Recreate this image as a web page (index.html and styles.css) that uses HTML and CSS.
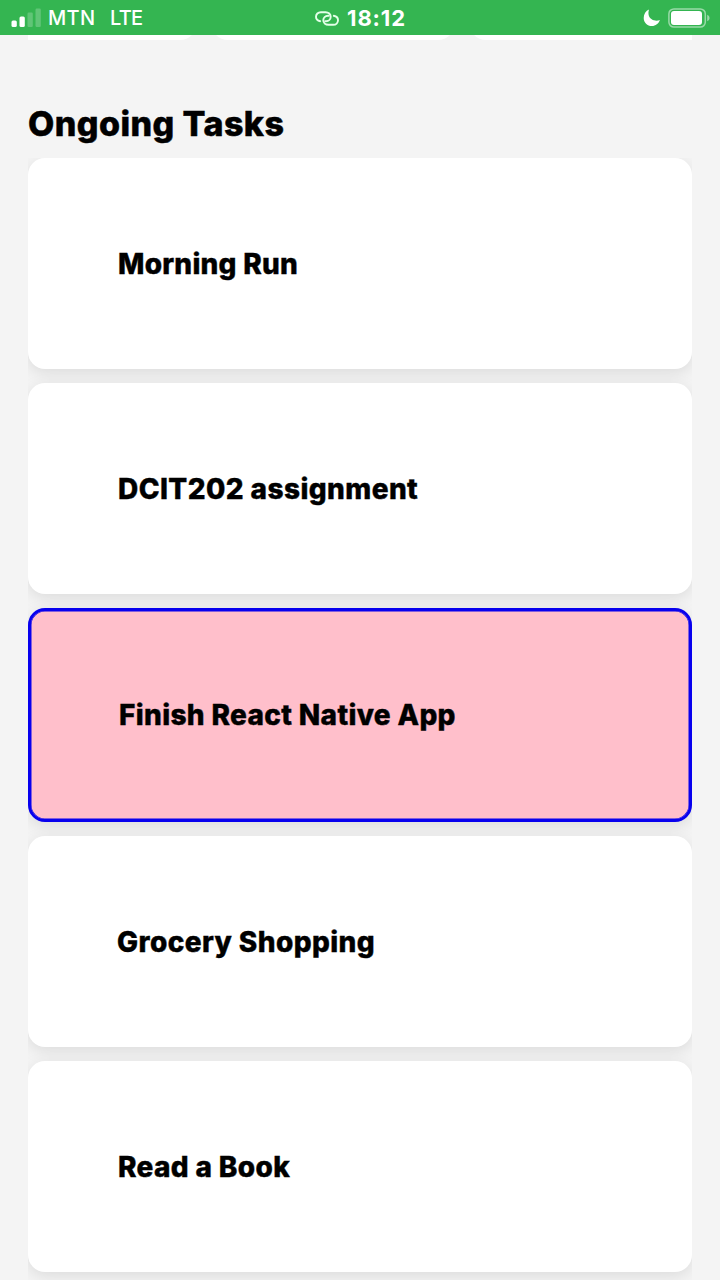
FILE: index.html
```
<!DOCTYPE html>
<html lang="en">
<head>
<meta charset="utf-8">
<title>Ongoing Tasks</title>
<link rel="stylesheet" href="styles.css">
</head>
<body>
<header class="status-bar">
  <div class="carrier">
    <svg class="signal" width="30" height="20" viewBox="0 0 30 20" fill="#fff">
      <rect x="0.5" y="12.5" width="5.3" height="6.5" rx="1.5"/>
      <rect x="8.5" y="8.5" width="5.3" height="10.5" rx="1.5"/>
      <rect x="16.5" y="4.5" width="5.3" height="14.5" rx="1.2" opacity=".22"/>
      <rect x="24.5" y="0.5" width="5.3" height="18.5" rx="1.2" opacity=".22"/>
    </svg>
    <span class="operator">MTN</span>
    <span class="network">LTE</span>
  </div>
  <div class="clock">
    <svg class="link-icon" width="24" height="15" viewBox="0 0 24 15" fill="none" stroke="#e4ffe9" stroke-width="1.9" stroke-linecap="round">
      <path d="M5.2 10.2C2.5 9.7 1 8 1 5.8C1 3.2 3 1.2 5.8 1.2H10.5C13.6 1.2 15.7 3.2 15.7 5.7C15.7 8.2 13.8 10.2 11 10.2H10.2"/>
      <path d="M18.8 4.8C21.5 5.3 23 7 23 9.2C23 11.8 21 13.8 18.2 13.8H13.5C10.4 13.8 8.3 11.8 8.3 9.3C8.3 6.8 10.2 4.8 13 4.8H13.8"/>
    </svg>
    <span class="time">18:12</span>
  </div>
  <div class="power">
    <svg class="moon" width="18" height="18" viewBox="0 0 18 18" fill="#fff">
      <path d="M6 .5C4.6 5.1 6.1 8.6 8.7 10.3C11.2 12 14.3 12.2 16.9 11C15.7 14.5 12.6 17 8.9 17C4.3 17 .7 13.4 .7 8.9C.7 5 2.8 1.9 6 .5Z"/>
    </svg>
    <svg class="battery" width="42" height="20" viewBox="0 0 42 20">
      <rect x=".9" y=".9" width="36.4" height="18.2" rx="5" fill="none" stroke="#fff" stroke-opacity=".5" stroke-width="1.5"/>
      <rect x="3" y="3" width="31" height="14" rx="3" fill="#fff"/>
      <path d="M39.2 6.7Q41.6 7.8 41.6 10Q41.6 12.2 39.2 13.3Z" fill="#fff" opacity=".5"/>
    </svg>
  </div>
</header>
<main class="screen">
  <div class="categories">
    <div class="category"></div>
    <div class="category category-mid"></div>
    <div class="category category-last"></div>
  </div>
  <h1 class="heading">Ongoing Tasks</h1>
  <section class="tasks">
    <article class="task"><span class="title title-tight">Morning Run</span></article>
    <article class="task"><span class="title title-wide">DCIT202 assignment</span></article>
    <article class="task selected"><span class="title">Finish React Native App</span></article>
    <article class="task shifted"><span class="title title-wide">Grocery Shopping</span></article>
    <article class="task"><span class="title">Read a Book</span></article>
  </section>
</main>
</body>
</html>
```
FILE: styles.css
```
* { box-sizing: border-box; }
body {
  margin: 0;
  width: 720px;
  height: 1280px;
  overflow: hidden;
  background: #f4f4f4;
  color: #000;
  font-family: Inter, "Liberation Sans", sans-serif;
}
svg { display: block; flex: none; }
.status-bar {
  display: flex;
  height: 35px;
  padding: 0 10px 0 11px;
  background: #34b551;
  color: #fff;
  line-height: 37px;
  white-space: nowrap;
}
.carrier { display: flex; width: 304px; }
.signal { margin-top: 8px; }
.operator, .network { font-size: 20px; font-weight: 500; }
.operator { width: 62px; padding-left: 7px; letter-spacing: 0.3px; }
.network { padding-left: 7px; letter-spacing: -0.7px; }
.clock { display: flex; flex: 1; }
.link-icon { margin: 11px 8px 0 0; }
.time { font-size: 22px; font-weight: 700; letter-spacing: 0.9px; }
.power { display: flex; }
.moon { margin: 9px 7px 0 0; }
.battery { margin-top: 8px; }
.screen { height: 1245px; padding: 0 28px; }
.categories {
  display: flex;
  gap: 14px;
  height: 5px;
  overflow: hidden;
  align-items: flex-end;
}
.category {
  width: 169px;
  height: 200px;
  flex: none;
  border-radius: 0 0 17px 17px;
  background: #fff;
}
.category:first-child { border-bottom-left-radius: 0; }
.category-mid { width: 244px; }
.category-last { width: 224px; border-bottom-right-radius: 0; }
.heading {
  height: 118px;
  margin: 0;
  padding-top: 64px;
  font-size: 34px;
  font-weight: 800;
  line-height: 40px;
  letter-spacing: 0.43px;
  -webkit-text-stroke: 0.5px #000;
}
.tasks {
  display: flex;
  flex-direction: column;
  gap: 14px;
  height: 1122px;
  overflow: hidden;
}
.task {
  display: flex;
  flex: none;
  align-items: center;
  height: 211px;
  padding-left: 90px;
  border-radius: 17px;
  background: #fff;
  box-shadow: 0 4px 16px rgba(0, 0, 0, .1);
  font-size: 28px;
  font-weight: 800;
  white-space: nowrap;
}
.title { letter-spacing: 0.35px; -webkit-text-stroke: 0.4px #000; }
.title-tight { letter-spacing: 0.25px; }
.title-wide { letter-spacing: 0.42px; }
.shifted { padding-left: 89px; }
.selected {
  height: 214px;
  padding-left: 88px;
  border: 3px solid #0800ee;
  background: #ffbfcb;
  box-shadow: inset 0 0 0 0.5px #0800ee, 0 4px 16px rgba(0, 0, 0, .1);
}
```
